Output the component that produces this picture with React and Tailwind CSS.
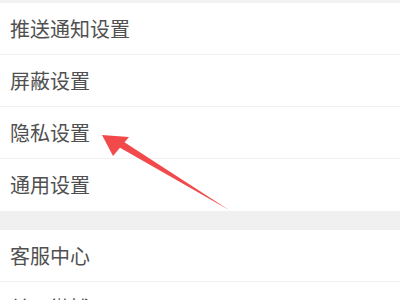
import React from 'react';

const groupA = ['推送通知设置', '屏蔽设置', '隐私设置', '通用设置'];
const groupB = ['客服中心', '关于微博'];

function Row({ label, last }) {
  return (
    <div
      className={`h-[52px] flex items-center pl-[10px] ${last ? '' : 'border-b border-[#f1f1f1]'}`}
    >
      <span className="text-[20px] leading-none text-[#505050]">{label}</span>
    </div>
  );
}

export default function App() {
  return (
    <div
      className="relative w-[400px] h-[300px] overflow-hidden bg-white"
      style={{ fontFamily: '"Noto Sans CJK SC", "Noto Sans", sans-serif' }}
    >
      <div className="h-[3px] bg-[#f2f2f2]" />
      <div className="flex flex-col">
        {groupA.map((label, i) => (
          <Row key={label} label={label} last={i === groupA.length - 1} />
        ))}
      </div>
      <div className="h-[19px] bg-[#f0f0f0]" />
      <div className="flex flex-col">
        {groupB.map((label) => (
          <Row key={label} label={label} />
        ))}
      </div>

      {/* red annotation arrow */}
      <svg
        className="absolute left-0 top-0 pointer-events-none"
        width="400"
        height="300"
        viewBox="0 0 400 300"
      >
        <path d="M117 146 L121 140 L229 210 Z" fill="#f24a4a" />
        <polygon points="102,135 129,137 113,156" fill="#f24a4a" />
      </svg>
    </div>
  );
}
